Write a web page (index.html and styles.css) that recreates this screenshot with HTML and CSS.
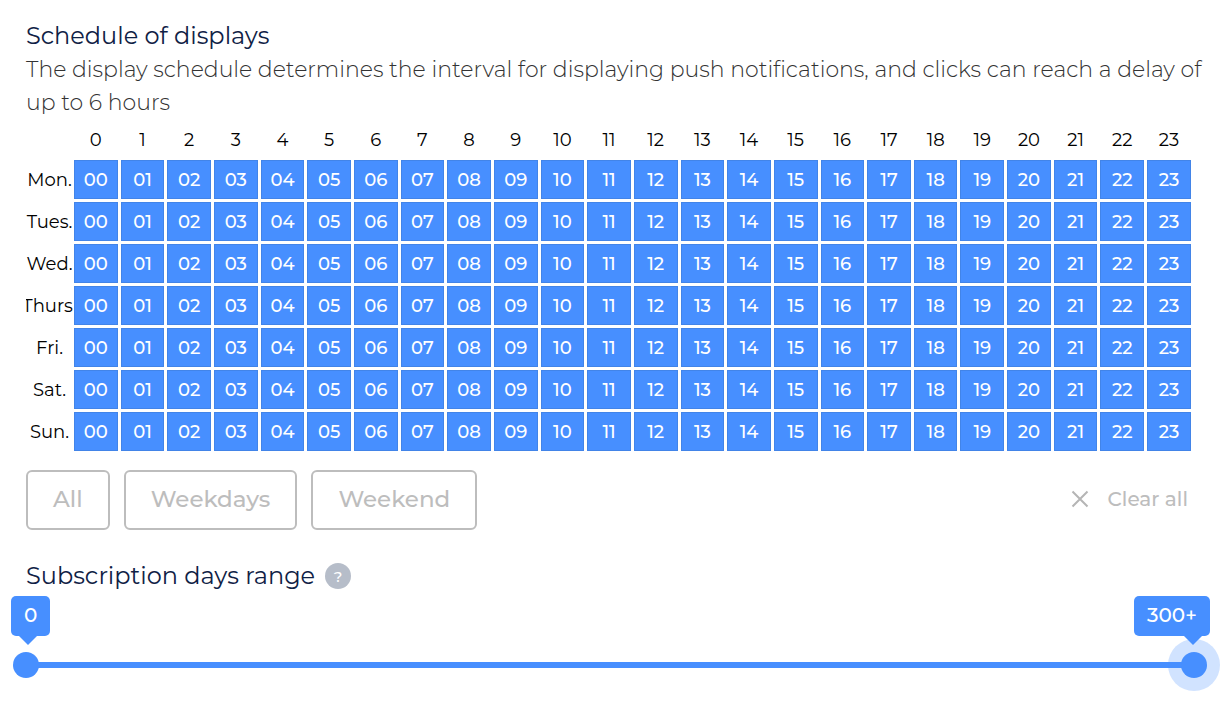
FILE: index.html
```html
<!DOCTYPE html>
<html lang="en">
<head>
<meta charset="utf-8">
<meta name="viewport" content="width=device-width, initial-scale=1">
<title>Schedule of displays</title>
<link rel="stylesheet" href="styles.css">
</head>
<body>
<main class="page">
  <section class="schedule">
    <h2 class="heading">Schedule of displays</h2>
    <p class="description">The display schedule determines the interval for displaying push notifications, and clicks can reach a delay of up to 6 hours</p>
    <table class="hours" id="hours">
      <thead><tr><td class="corner"></td></tr></thead>
      <tbody></tbody>
    </table>
    <div class="actions">
      <button class="preset" type="button">All</button>
      <button class="preset" type="button">Weekdays</button>
      <button class="preset" type="button">Weekend</button>
      <button class="clear" type="button">
        <svg class="clear-icon" viewBox="0 0 18 18" aria-hidden="true"><path d="M1.5 1.5l15 15M16.500 1.500l-15 15"/></svg>
        Clear all
      </button>
    </div>
  </section>
  <section class="range">
    <div class="range-title">
      <h2 class="heading">Subscription days range</h2>
      <button class="help" type="button" aria-label="Help">?</button>
    </div>
    <div class="slider">
      <output class="bubble bubble-min" for="min-days">0</output>
      <output class="bubble bubble-max" for="max-days">300+</output>
      <div class="track"></div>
      <input class="thumb" id="min-days" type="range" min="0" max="300" value="0" aria-label="Minimum days">
      <input class="thumb thumb-active" id="max-days" type="range" min="0" max="300" value="300" aria-label="Maximum days">
    </div>
  </section>
</main>
<script src="script.js"></script>
</body>
</html>
```
FILE: styles.css
```css
* { box-sizing: border-box; }

body {
  margin: 0;
  background: #fff;
  color: #000;
  font-family: Montserrat, Inter, "Open Sans", sans-serif;
}

button { font: inherit; cursor: pointer; }

.page { padding: 19px 38px 0 26px; }

.heading {
  margin: 0;
  color: #0f2145;
  font-size: 24px;
  line-height: 34px;
  font-weight: 400;
}

.description {
  margin: 0 -12px 0 0;
  color: #333;
  font-size: 22px;
  line-height: 33px;
  font-weight: 300;
}

/* Outer border-spacing is pulled outside the content edge. */
.hours {
  width: calc(100% + 6px);
  margin: 0 -3px;
  table-layout: fixed;
  border-collapse: separate;
  border-spacing: 3px;
  font-size: 18px;
}

.hours th, .hours td { padding: 0; font-weight: 400; }
.corner { width: 45px; }
.hours thead th { height: 35px; }

.day {
  display: flex;
  justify-content: center;
  margin-right: -2px;
  overflow: hidden;
  white-space: nowrap;
}

.hour {
  display: block;
  width: 100%;
  height: 39px;
  padding: 0;
  border: 1px solid #4284e8;
  background: #478fff;
  color: #fff;
  font-weight: 500;
}

.hour[aria-pressed="false"] { background: #fff; color: #000; }

.actions {
  display: flex;
  align-items: center;
  gap: 14px;
  padding-top: 16px;
}

.preset {
  height: 60px;
  padding: 0 25px 3px;
  border: 2px solid #bdbdbd;
  border-radius: 6px;
  background: #fff;
  color: #bdbdbd;
  font-size: 23px;
  font-weight: 500;
}

.clear {
  display: flex;
  align-items: center;
  gap: 19px;
  margin-left: auto;
  padding: 0 3px 2px;
  border: 0;
  background: none;
  color: #bdbdbd;
  font-size: 20px;
  font-weight: 500;
}

.clear-icon {
  width: 18px;
  height: 18px;
  fill: none;
  stroke: #b5b5b5;
  stroke-width: 2;
}

.range { padding-top: 29px; }

.range-title { display: flex; align-items: center; gap: 10px; }

.help {
  width: 26px;
  height: 26px;
  padding: 0;
  border: 0;
  border-radius: 50%;
  background: #b6bdc9;
  color: #fff;
  font-size: 15px;
  font-weight: 500;
}

.slider {
  position: relative;
  display: grid;
  align-items: center;
  margin: 46px -29px 0 -26px;
}

.track, .thumb { grid-area: 1 / 1; }

.track { height: 6px; margin: 0 26px; background: #478fff; }

/* The padding leaves room for the halo of the active thumb. */
.thumb {
  appearance: none;
  width: 100%;
  height: 52px;
  margin: 0;
  padding: 0 13px;
  background: none;
  pointer-events: none;
}

.thumb::-webkit-slider-thumb {
  appearance: none;
  width: 26px;
  height: 26px;
  border-radius: 50%;
  background: #478fff;
  pointer-events: auto;
}

.thumb-active::-webkit-slider-thumb { box-shadow: 0 0 0 13px rgba(71, 143, 255, 0.25); }

.bubble {
  position: absolute;
  bottom: 55px;
  z-index: 1;
  padding: 0 13px 2px;
  border-radius: 5px;
  background: #478fff;
  color: #fff;
  font-size: 20px;
  line-height: 38px;
  font-weight: 500;
}

.bubble::after {
  content: "";
  position: absolute;
  top: 100%;
  border: 9px solid transparent;
  border-top-color: #478fff;
  border-bottom: 0;
}

.bubble-min { left: 11px; }
.bubble-min::after { left: 8px; }
.bubble-max { right: 10px; }
.bubble-max::after { right: 8px; }
```
FILE: script.js
```js
const days = ["Mon.", "Tues.", "Wed.", "Thurs.", "Fri.", "Sat.", "Sun."];
const table = document.getElementById("hours");
const hours = Array.from({ length: 24 }, (_, hour) => hour);

table.tHead.rows[0].insertAdjacentHTML(
  "beforeend",
  hours.map((hour) => `<th scope="col">${hour}</th>`).join("")
);

table.tBodies[0].innerHTML = days.map((day) => {
  const cells = hours.map((hour) =>
    `<td><button class="hour" type="button" aria-pressed="true">${String(hour).padStart(2, "0")}</button></td>`
  ).join("");
  return `<tr><th scope="row"><span class="day">${day}</span></th>${cells}</tr>`;
}).join("");

const allHours = [...table.querySelectorAll(".hour")];
allHours.forEach((button) => button.addEventListener("click", () => {
  button.setAttribute("aria-pressed", String(button.getAttribute("aria-pressed") !== "true"));
}));

const selectDays = (first, last) => allHours.forEach((button, index) => {
  const day = Math.floor(index / 24);
  button.setAttribute("aria-pressed", String(day >= first && day <= last));
});

const [all, weekdays, weekend] = document.querySelectorAll(".preset");
all.addEventListener("click", () => selectDays(0, 6));
weekdays.addEventListener("click", () => selectDays(0, 4));
weekend.addEventListener("click", () => selectDays(5, 6));
document.querySelector(".clear").addEventListener("click", () => selectDays(7, 7));
```
